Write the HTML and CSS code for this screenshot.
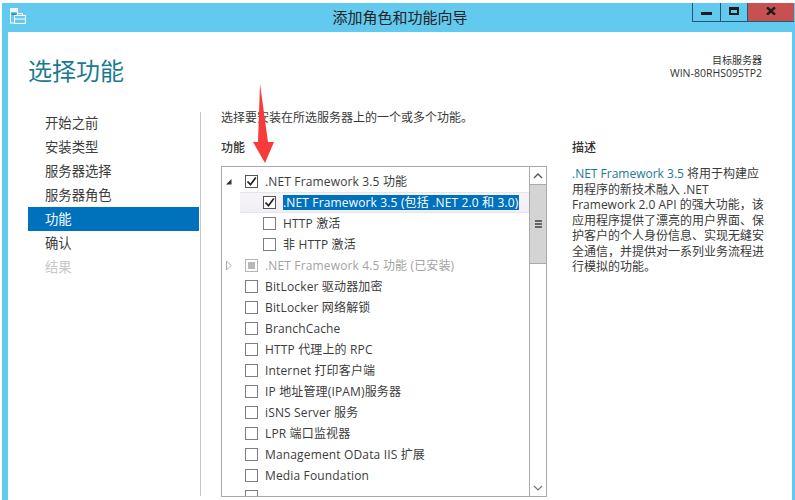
FILE: index.html
```html
<!DOCTYPE html>
<html lang="zh-CN">
<head>
<meta charset="utf-8">
<title>添加角色和功能向导</title>
<link rel="stylesheet" href="styles.css">
</head>
<body>
<div class="window">
  <header class="titlebar">
    <svg class="app-icon" width="16" height="16" viewBox="0 0 16 16" fill="none" stroke="#fff" stroke-width="1.1">
      <rect x="0.5" y="0.5" width="7" height="14.5" fill="#5fc9ee"/>
      <rect x="0.5" y="0.5" width="7" height="3.5" fill="#eaf8fd" stroke="none"/>
      <rect x="1.5" y="5.5" width="5" height="1.4" fill="#1f7fa8" stroke="none"/>
      <rect x="4.5" y="7.5" width="11" height="8" fill="#5fc9ee"/>
      <path d="M7.5 7.5V5.5h5v2M4.5 11h11"/>
    </svg>
    <div class="title">添加角色和功能向导</div>
    <div class="controls">
      <div class="ctl"><span class="min"></span></div>
      <div class="ctl"><span class="max"></span></div>
      <div class="ctl close"><svg width="10" height="8" viewBox="0 0 10 8"><path d="M1 .3l8 7.4M9 .3l-8 7.4" stroke="#1c1c1c" stroke-width="2.4" fill="none"/></svg></div>
    </div>
  </header>
  <div class="content">
    <div class="head">
      <h1>选择功能</h1>
      <div class="server"><div>目标服务器</div><div class="server-name">WIN-80RHS095TP2</div></div>
    </div>
    <div class="main">
      <nav class="nav">
        <div class="nav-item">开始之前</div>
        <div class="nav-item">安装类型</div>
        <div class="nav-item">服务器选择</div>
        <div class="nav-item">服务器角色</div>
        <div class="nav-item active">功能</div>
        <div class="nav-item">确认</div>
        <div class="nav-item disabled">结果</div>
      </nav>
      <div class="divider"></div>
      <div class="panel">
        <p class="intro">选择要安装在所选服务器上的一个或多个功能。</p>
        <div class="cols">
          <section class="features">
            <h2>功能</h2>
            <div class="listbox">
              <div class="rows">
                <div class="row"><span class="exp"><svg width="7" height="7" viewBox="0 0 7 7"><path d="M6.5 1v5.500H1z" fill="#333"/></svg></span><span class="cb on"><svg width="11" height="11" viewBox="0 0 11 11"><path d="M1.5 5.500l3 3.200L9.800 1.500" fill="none" stroke="#222" stroke-width="1.700"/></svg></span><span>.NET Framework 3.5 功能</span></div>
                <div class="row child focus"><span class="cb on"><svg width="11" height="11" viewBox="0 0 11 11"><path d="M1.5 5.500l3 3.200L9.800 1.500" fill="none" stroke="#222" stroke-width="1.700"/></svg></span><span class="sel">.NET Framework 3.5 (包括 .NET 2.0 和 3.0)</span></div>
                <div class="row child"><span class="cb"></span><span>HTTP 激活</span></div>
                <div class="row child"><span class="cb"></span><span>非 HTTP 激活</span></div>
                <div class="row dim"><span class="exp"><svg width="7" height="11" viewBox="0 0 7 11"><path d="M1.500 1l4.500 4.500L1.500 10z" fill="none" stroke="#aaa"/></svg></span><span class="cb part"><i></i></span><span>.NET Framework 4.5 功能 (已安装)</span></div>
                <div class="row leaf"><span class="cb"></span><span>BitLocker 驱动器加密</span></div>
                <div class="row leaf"><span class="cb"></span><span>BitLocker 网络解锁</span></div>
                <div class="row leaf"><span class="cb"></span><span>BranchCache</span></div>
                <div class="row leaf"><span class="cb"></span><span>HTTP 代理上的 RPC</span></div>
                <div class="row leaf"><span class="cb"></span><span>Internet 打印客户端</span></div>
                <div class="row leaf"><span class="cb"></span><span>IP 地址管理(IPAM)服务器</span></div>
                <div class="row leaf"><span class="cb"></span><span>iSNS Server 服务</span></div>
                <div class="row leaf"><span class="cb"></span><span>LPR 端口监视器</span></div>
                <div class="row leaf"><span class="cb"></span><span>Management OData IIS 扩展</span></div>
                <div class="row leaf"><span class="cb"></span><span>Media Foundation</span></div>
                <div class="row leaf"><span class="cb"></span><span></span></div>
              </div>
              <div class="scrollbar">
                <div class="sb-btn"><svg width="10" height="6" viewBox="0 0 10 6"><path d="M1 5l4-4 4 4" fill="none" stroke="#555" stroke-width="1.300"/></svg></div>
                <div class="sb-thumb"><span></span><span></span><span></span></div>
                <div class="sb-track"></div>
                <div class="sb-btn"><svg width="10" height="6" viewBox="0 0 10 6"><path d="M1 1l4 4 4-4" fill="none" stroke="#777" stroke-width="1.200"/></svg></div>
              </div>
            </div>
          </section>
          <aside class="desc">
            <h2>描述</h2>
            <p><span class="link">.NET Framework 3.5</span> 将用于构建应<br>用程序的新技术融入 .NET<br>Framework 2.0 API 的强大功能，该<br>应用程序提供了漂亮的用户界面、保<br>护客户的个人身份信息、实现无缝安<br>全通信，并提供对一系列业务流程进<br>行模拟的功能。</p>
          </aside>
        </div>
      </div>
    </div>
  </div>
</div>
<svg class="arrow" width="21" height="80" viewBox="0 0 21 80"><path d="M7 0L5 58H0L12 79 21 58H15Z" fill="#f73a3a"/></svg>
</body>
</html>
```
FILE: styles.css
```css
* { box-sizing: border-box; }
html, body { margin: 0; height: 100%; overflow: hidden; background: #fff; }
body { font-family: "Open Sans", "Noto Sans CJK SC", sans-serif; font-size: 12px; color: #3c3c3c; position: relative; }
h1, h2, p { margin: 0; font-weight: normal; }
.window { margin: 3px 0 0 2px; height: 497px; background: #62c9ef; padding: 0 3px 0 6px; display: flex; flex-direction: column; }
.titlebar { height: 29px; flex: none; display: flex; position: relative; align-items: flex-start; }
.app-icon { margin: 5px 0 0 2px; }
.title { position: absolute; left: 0; right: 0; top: 4px; text-align: center; font-size: 15px; line-height: 20px; color: #222; }
.controls { margin-left: auto; display: flex; height: 19px; margin-right: -2px; position: relative; }
.ctl { width: 28px; border: 1px solid #28566e; border-top: 0; border-right: 0; display: flex; align-items: center; justify-content: center; }
.ctl:nth-child(2) { width: 27px; }
.ctl.close { width: 47px; background: #c75050; }
.min { width: 11px; height: 3px; background: #1c1c1c; margin-top: 3px; }
.max { width: 10px; height: 8px; border: 2px solid #1c1c1c; border-top-width: 3px; margin-top: -2px; }
.close svg { margin-top: -2px; }
.content { flex: 1; background: #fff; display: flex; flex-direction: column; min-height: 0; }
.head { height: 78px; flex: none; display: flex; justify-content: space-between; padding: 0 30px 0 20px; }
h1 { font-size: 24px; line-height: 32px; color: #1b7a93; margin-top: 23px; }
.server { font-size: 10px; line-height: 13px; color: #333; text-align: right; margin-top: 22px; }
.server-name { font-size: 10.5px; }
.main { flex: 1; display: flex; min-height: 0; }
.nav { width: 171px; margin-left: 20px; flex: none; padding-top: 1px; }
.nav-item { height: 24px; line-height: 24px; padding-left: 17px; font-size: 13.33px; color: #3c3c3c; }
.nav-item.active { background: #0071bc; color: #fff; }
.nav-item.disabled { color: #c8c8c8; }
.divider { width: 1px; flex: none; margin: 2px 0 4px 1px; background: #c6c6c6; }
.panel { flex: 1; padding: 0 0 0 20px; display: flex; flex-direction: column; min-height: 0; }
.intro { line-height: 16px; height: 27px; color: #3a3a3a; }
.cols { flex: 1; display: flex; min-height: 0; }
.features { width: 326px; flex: none; display: flex; flex-direction: column; min-height: 0; }
h2 { font-size: 12px; line-height: 16px; font-weight: 500; color: #333; margin-top: 3px; margin-bottom: 10px; }
.listbox { height: 331px; flex: none; border: 1px solid #aaa; display: flex; overflow: hidden; }
.rows { flex: 1; min-width: 0; padding-top: 4px; overflow: hidden; letter-spacing: .15px; }
.row { height: 21px; line-height: 18px; display: flex; align-items: center; white-space: nowrap; }
.exp { width: 23px; flex: none; display: flex; align-items: center; padding-left: 3px; }
.cb { width: 13px; height: 13px; border: 1px solid #7e7e7e; background: #fff; flex: none; margin-right: 7px; display: flex; align-items: center; justify-content: center; }
.cb.on { border-color: #555; }
.cb.part { border-color: #b5b5b5; }
.cb.part i { width: 7px; height: 7px; background: #b8b8b8; display: block; }
.row.leaf { padding-left: 23px; }
.row.child { padding-left: 41px; }
.row.focus { margin-left: 18px; padding-left: 23px; background: linear-gradient(#f5f3f7, #f1eff4); border-top: 1px solid #e6e6ea; border-bottom: 1px solid #e6e6ea; }
.sel { background: #0071bc; color: #fff; height: 15px; line-height: 15px; display: block; }
.dim { color: #a3a3a3; }
.scrollbar { width: 17px; flex: none; border-left: 1px solid #aaa; background: #fff; display: flex; flex-direction: column; }
.sb-btn { height: 17px; background: #fff; display: flex; align-items: center; justify-content: center; flex: none; }
.sb-thumb { height: 80px; background: #d4d4d4; border-top: 1px solid #aaa; border-bottom: 1px solid #aaa; flex: none; display: flex; flex-direction: column; align-items: center; justify-content: center; gap: 1px; }
.sb-thumb span { width: 7px; height: 2px; background: #666; }
.sb-track { flex: 1; }
.desc { margin-left: 25px; width: 200px; }
.desc p { line-height: 15.5px; color: #3a3a3a; white-space: nowrap; }
.link { color: #1b7a93; }
.arrow { position: absolute; left: 253px; top: 84px; }
```
